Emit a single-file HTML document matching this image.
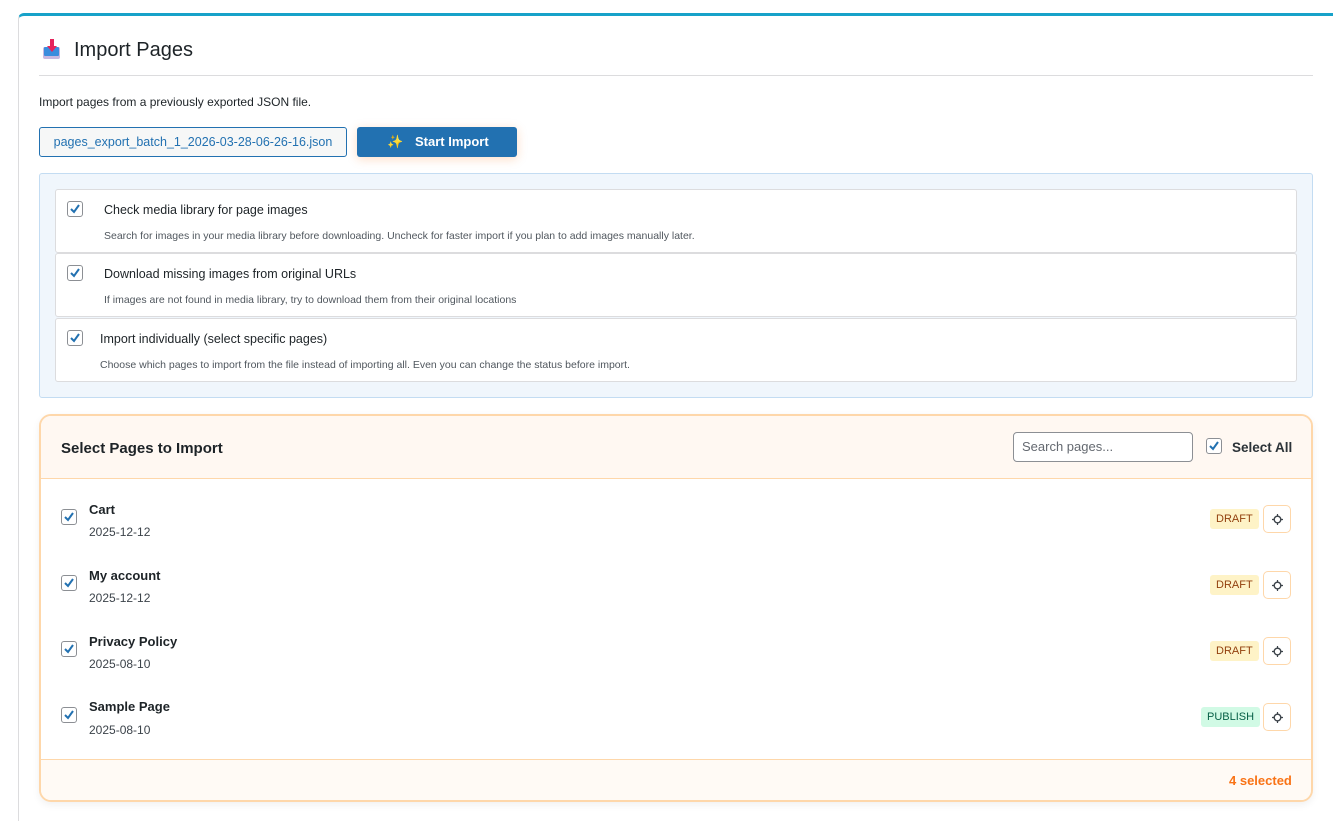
<!DOCTYPE html>
<html><head><meta charset="utf-8"><style>
*{box-sizing:border-box;margin:0;padding:0}
html,body{width:1333px;height:821px;overflow:hidden}
body{background:#fff;font-family:"Liberation Sans",sans-serif;color:#1d2327;position:relative}
.a{position:absolute}
.card{left:18px;top:13px;width:1330px;height:820px;border:1px solid #dcdcde;border-top:3px solid #17a2c9;border-radius:6px 6px 0 0;background:#fff}
.cb{position:absolute;width:16px;height:16px;border:1px solid #8c8f94;border-radius:3px;background:#fff}
.cb svg{position:absolute;left:1px;top:1px}
.opt{position:absolute;left:55px;width:1242px;height:64px;background:#fff;border:1px solid #dcdcde;border-radius:3px}
.opt .t{position:absolute;left:48px;top:13px;font-size:12.5px;color:#1d2327}
.opt .d{position:absolute;left:48px;top:40px;font-size:10.5px;color:#50575e}
.row .n{position:absolute;left:89px;font-size:13px;font-weight:bold}
.row .dt{position:absolute;left:89px;font-size:12px;color:#3c434a}
.badge{position:absolute;height:20px;font-size:11px;line-height:20px;padding:0 6px;border-radius:3px}
.gear{position:absolute;left:1263px;width:28px;height:28px;border:1px solid #fed7aa;border-radius:5px;background:#fff}
.gear svg{position:absolute;left:8px;top:8px}
</style></head><body>
<div class="a card"></div>
<svg class="a" style="left:42px;top:38px" width="20" height="22" viewBox="0 0 20 22"><rect x="1" y="9" width="17" height="12" rx="2" fill="#c9b8e0"/><rect x="2" y="9" width="15" height="9" rx="1" fill="#3b8ddd"/><rect x="8" y="1" width="4" height="8" fill="#e5245b"/><path d="M5 8h10l-5 6z" fill="#e5245b"/></svg>
<div class="a" style="left:74px;top:39px;font-size:20px;color:#1d2327">Import Pages</div>
<div class="a" style="left:39px;top:75px;width:1274px;height:1px;background:#dcdcde"></div>
<div class="a" style="left:39px;top:95px;font-size:12px">Import pages from a previously exported JSON file.</div>
<div class="a" style="left:39px;top:127px;width:308px;height:30px;border:1px solid #2271b1;border-radius:3px;background:#f6f7f7;color:#2271b1;font-size:12.5px;line-height:28px;text-align:center">pages_export_batch_1_2026-03-28-06-26-16.json</div>
<div class="a" style="left:357px;top:127px;width:160px;height:30px;background:#2271b1;border-radius:3px;color:#fff;font-size:13px;font-weight:bold;line-height:30px;box-shadow:0 2px 10px rgba(249,115,22,.25)"><span style="position:absolute;left:30px;color:#f7c948">✨</span><span style="position:absolute;left:58px">Start Import</span></div>
<div class="a" style="left:39px;top:173px;width:1274px;height:225px;background:#f0f6fc;border:1px solid #c3dcf2;border-radius:3px"></div>
<div class="opt" style="top:189px"><div class="cb" style="left:11px;top:11px"><svg width="12" height="12" viewBox="0 0 12 12"><path d="M2 6l3 3 5-7" stroke="#2271b1" stroke-width="2" fill="none"/></svg></div><div class="t">Check media library for page images</div><div class="d">Search for images in your media library before downloading. Uncheck for faster import if you plan to add images manually later.</div></div>
<div class="opt" style="top:253px"><div class="cb" style="left:11px;top:11px"><svg width="12" height="12" viewBox="0 0 12 12"><path d="M2 6l3 3 5-7" stroke="#2271b1" stroke-width="2" fill="none"/></svg></div><div class="t">Download missing images from original URLs</div><div class="d">If images are not found in media library, try to download them from their original locations</div></div>
<div class="opt" style="top:318px"><div class="cb" style="left:11px;top:11px"><svg width="12" height="12" viewBox="0 0 12 12"><path d="M2 6l3 3 5-7" stroke="#2271b1" stroke-width="2" fill="none"/></svg></div><div class="t" style="left:44px">Import individually (select specific pages)</div><div class="d" style="left:44px">Choose which pages to import from the file instead of importing all. Even you can change the status before import.</div></div>

<div class="a" style="left:39px;top:414px;width:1274px;height:388px;border:2px solid #fed7aa;border-radius:12px;background:#fff;overflow:hidden;box-shadow:0 3px 8px rgba(0,0,0,.06)">
 <div class="a" style="left:0;top:0;width:100%;height:63px;background:#fff8f2;border-bottom:1px solid #fed7aa"></div>
 <div class="a" style="left:0;top:343px;width:100%;height:45px;background:#fffaf5;border-top:1px solid #fed7aa"></div>
</div>
<div class="a" style="left:61px;top:440px;font-size:15px;font-weight:bold">Select Pages to Import</div>
<div class="a" style="left:1013px;top:432px;width:180px;height:30px;border:1px solid #8c8f94;border-radius:4px;background:#fff;font-size:13px;color:#646970;line-height:28px;padding-left:8px">Search pages...</div>
<div class="cb" style="left:1206px;top:438px"><svg width="12" height="12" viewBox="0 0 12 12"><path d="M2 6l3 3 5-7" stroke="#2271b1" stroke-width="2" fill="none"/></svg></div>
<div class="a" style="left:1232px;top:440px;font-size:13.5px;font-weight:bold;color:#2c3338">Select All</div>

<div class="row">
<div class="cb" style="left:61px;top:509px"><svg width="12" height="12" viewBox="0 0 12 12"><path d="M2 6l3 3 5-7" stroke="#2271b1" stroke-width="2" fill="none"/></svg></div>
<div class="n" style="top:502px">Cart</div><div class="dt" style="top:525px">2025-12-12</div>
<div class="badge" style="left:1210px;top:509px;background:#fef3c7;color:#92400e">DRAFT</div>
<div class="gear" style="top:505px"><svg width="11" height="11" viewBox="0 0 11 11"><circle cx="5.5" cy="5.5" r="3.3" stroke="#3c434a" stroke-width="1.4" fill="none"/><path d="M5.5 0v2M5.5 9v2M0 5.5h2M9 5.5h2" stroke="#3c434a" stroke-width="1.2"/></svg></div>

<div class="cb" style="left:61px;top:575px"><svg width="12" height="12" viewBox="0 0 12 12"><path d="M2 6l3 3 5-7" stroke="#2271b1" stroke-width="2" fill="none"/></svg></div>
<div class="n" style="top:568px">My account</div><div class="dt" style="top:591px">2025-12-12</div>
<div class="badge" style="left:1210px;top:575px;background:#fef3c7;color:#92400e">DRAFT</div>
<div class="gear" style="top:571px"><svg width="11" height="11" viewBox="0 0 11 11"><circle cx="5.5" cy="5.5" r="3.3" stroke="#3c434a" stroke-width="1.4" fill="none"/><path d="M5.5 0v2M5.5 9v2M0 5.5h2M9 5.5h2" stroke="#3c434a" stroke-width="1.2"/></svg></div>

<div class="cb" style="left:61px;top:641px"><svg width="12" height="12" viewBox="0 0 12 12"><path d="M2 6l3 3 5-7" stroke="#2271b1" stroke-width="2" fill="none"/></svg></div>
<div class="n" style="top:634px">Privacy Policy</div><div class="dt" style="top:657px">2025-08-10</div>
<div class="badge" style="left:1210px;top:641px;background:#fef3c7;color:#92400e">DRAFT</div>
<div class="gear" style="top:637px"><svg width="11" height="11" viewBox="0 0 11 11"><circle cx="5.5" cy="5.5" r="3.3" stroke="#3c434a" stroke-width="1.4" fill="none"/><path d="M5.5 0v2M5.5 9v2M0 5.5h2M9 5.5h2" stroke="#3c434a" stroke-width="1.2"/></svg></div>

<div class="cb" style="left:61px;top:707px"><svg width="12" height="12" viewBox="0 0 12 12"><path d="M2 6l3 3 5-7" stroke="#2271b1" stroke-width="2" fill="none"/></svg></div>
<div class="n" style="top:699px">Sample Page</div><div class="dt" style="top:723px">2025-08-10</div>
<div class="badge" style="left:1201px;top:707px;background:#d1fae5;color:#065f46">PUBLISH</div>
<div class="gear" style="top:703px"><svg width="11" height="11" viewBox="0 0 11 11"><circle cx="5.5" cy="5.5" r="3.3" stroke="#3c434a" stroke-width="1.4" fill="none"/><path d="M5.5 0v2M5.5 9v2M0 5.5h2M9 5.5h2" stroke="#3c434a" stroke-width="1.2"/></svg></div>
</div>
<div class="a" style="left:1229px;top:773px;font-size:13px;font-weight:bold;color:#f97316">4 selected</div>
</body></html>
